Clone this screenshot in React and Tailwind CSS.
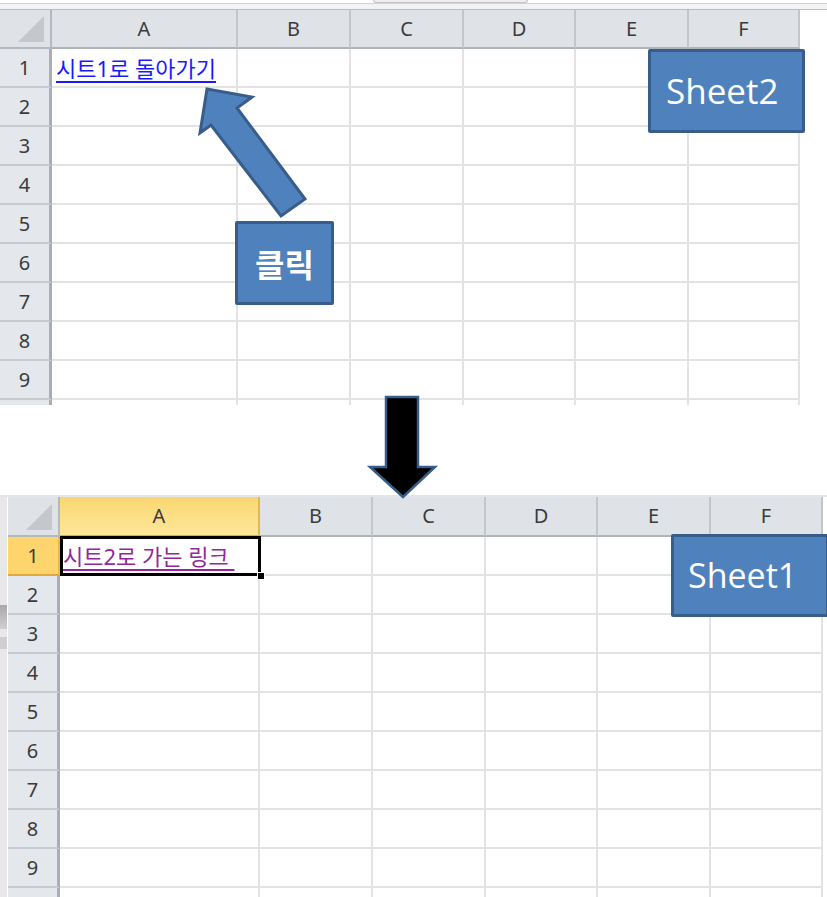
const LETTERS = ["A", "B", "C", "D", "E", "F"];
const ROWS = [1, 2, 3, 4, 5, 6, 7, 8, 9, 10];

const font = { fontFamily: '"Noto Sans", "Noto Sans CJK KR", sans-serif' };

function Corner() {
  return (
    <div className="relative bg-[#dfe3e8] border-r-2 border-b-2 border-[#b4b9bf]">
      <svg className="absolute right-[6px] bottom-[5px]" width="26" height="26">
        <polygon points="26,0 26,26 0,26" fill="#c4c8cd" />
      </svg>
    </div>
  );
}

function ColHeader({ letter, selected }) {
  if (selected) {
    return (
      <div className="flex items-center justify-center bg-gradient-to-b from-[#f9d670] to-[#ffe799] border-r-2 border-b-2 border-r-[#e3b94f] border-b-[#e2a93a] text-[20px] text-[#3b3b3b]">
        {letter}
      </div>
    );
  }
  return (
    <div className="flex items-center justify-center bg-[#dfe3e8] border-r-2 border-b-2 border-r-[#c3c7cc] border-b-[#aeb3b9] text-[20px] text-[#3b3b3b]">
      {letter}
    </div>
  );
}

function RowHeader({ n, selected }) {
  if (selected) {
    return (
      <div className="flex items-center justify-center bg-[#fdd56c] border-r-2 border-b-2 border-r-[#e3b94f] border-b-[#e2a93a] text-[20px] text-[#3b3b3b]">
        {n}
      </div>
    );
  }
  return (
    <div className="flex items-center justify-center bg-[#e4e7ec] border-r-[3px] border-b-2 border-r-[#a9aeb4] border-b-[#c7cbd0] text-[20px] text-[#3b3b3b]">
      {n < 10 ? n : ""}
    </div>
  );
}

function Cell({ children }) {
  return (
    <div className="relative flex items-center border-r-2 border-b-2 border-[#e3e3e3] bg-white overflow-visible whitespace-nowrap">
      {children}
    </div>
  );
}

function TopSheet() {
  return (
    <div className="h-[395px] w-[800px] overflow-hidden">
      <div className="grid grid-cols-[52px_186px_113px_113px_112px_113px_111px] auto-rows-[39px]">
        <Corner />
        {LETTERS.map((l) => (
          <ColHeader key={l} letter={l} />
        ))}
        {ROWS.map((r) => (
          <div key={r} className="contents">
            <RowHeader n={r} />
            {LETTERS.map((l) => (
              <Cell key={l}>
                {r === 1 && l === "A" && (
                  <span className="pl-[4px] pt-[2px] text-[22px] text-[#1a1aff] underline underline-offset-[4px] decoration-[1.5px]">
                    시트1로 돌아가기
                  </span>
                )}
              </Cell>
            ))}
          </div>
        ))}
      </div>
    </div>
  );
}

function BottomSheet() {
  return (
    <div className="flex h-[400px] overflow-hidden">
      <div className="w-[7px] h-full bg-[#e8e8e8] flex flex-col">
        <div className="h-[108px]" />
        <div className="h-[24px] bg-gradient-to-b from-[#a9a9a9] to-[#d0d0d0]" />
        <div className="h-[8px]" />
        <div className="h-[12px] bg-[#cfcfcf]" />
      </div>
      <div className="w-px h-full bg-white" />
      <div className="grid grid-cols-[52px_200px_113px_113px_112px_113px_112px] grid-rows-[40px] auto-rows-[39px]">
        <Corner />
        {LETTERS.map((l) => (
          <ColHeader key={l} letter={l} selected={l === "A"} />
        ))}
        {ROWS.map((r) => (
          <div key={r} className="contents">
            <RowHeader n={r} selected={r === 1} />
            {LETTERS.map((l) => (
              <Cell key={l}>
                {r === 1 && l === "A" && (
                  <>
                    <span className="pl-[3px] pt-[1px] text-[22px] text-[#93279b] underline underline-offset-[4px] decoration-[1.5px]">
                      시트2로 가는 링크&nbsp;
                    </span>
                    <div className="absolute top-[-1px] left-0 right-[-3px] bottom-[-2px] border-[3px] border-black z-10" />
                    <div className="absolute bottom-[-6px] right-[-7px] w-[8px] h-[8px] bg-black border border-white z-20" />
                  </>
                )}
              </Cell>
            ))}
          </div>
        ))}
      </div>
    </div>
  );
}

function ShapeBox({ className, children }) {
  return (
    <div
      className={
        "absolute bg-[#4f81bd] border-[3px] border-[#385d8a] rounded-[2px] text-white flex items-center " +
        className
      }
    >
      {children}
    </div>
  );
}

export default function App() {
  return (
    <div className="relative w-[827px] h-[897px] bg-white overflow-hidden" style={font}>
      {/* formula bar edge */}
      <div className="h-[3px] flex">
        <div className="ml-[373px] w-[155px] h-[3px] bg-[#eeeeee] border-x border-b border-[#c6c6c6] rounded-b-[3px]" />
      </div>
      <div className="h-px bg-[#cfd3d8]" />
      <div className="h-[5px] bg-[#f1f3f5]" />
      <div className="h-px bg-[#b9bec4]" />

      <TopSheet />

      <div className="h-[75px]" />
      <div className="h-[15px]" />
      <div className="h-[2px] bg-[#e2e5e9]" />

      <BottomSheet />

      {/* arrows */}
      <svg className="absolute inset-0 pointer-events-none z-30" width="827" height="897">
        <polygon
          points="207,89 252,97 237,108 305,199 281,216 211,125 200,133"
          fill="#4f81bd"
          stroke="#385d8a"
          strokeWidth="3"
          strokeLinejoin="miter"
        />
        <polygon
          points="386,397 418,397 418,467 435,467 403,497 370,467 386,467"
          fill="#000000"
          stroke="#385d8a"
          strokeWidth="2.5"
        />
      </svg>

      <ShapeBox className="left-[648px] top-[49px] w-[157px] h-[84px] pl-[15px] text-[35px] z-30">
        <span style={{ fontFamily: '"Open Sans", sans-serif' }}>Sheet2</span>
      </ShapeBox>
      <ShapeBox className="left-[235px] top-[221px] w-[99px] h-[84px] justify-center text-[32px] font-bold z-30">
        <span style={{ fontFamily: '"Noto Sans CJK KR", sans-serif' }}>클릭</span>
      </ShapeBox>
      <ShapeBox className="left-[671px] top-[534px] w-[158px] h-[83px] pl-[14px] text-[34px] z-30">
        <span style={{ fontFamily: '"Open Sans", sans-serif' }}>Sheet1</span>
      </ShapeBox>
    </div>
  );
}
